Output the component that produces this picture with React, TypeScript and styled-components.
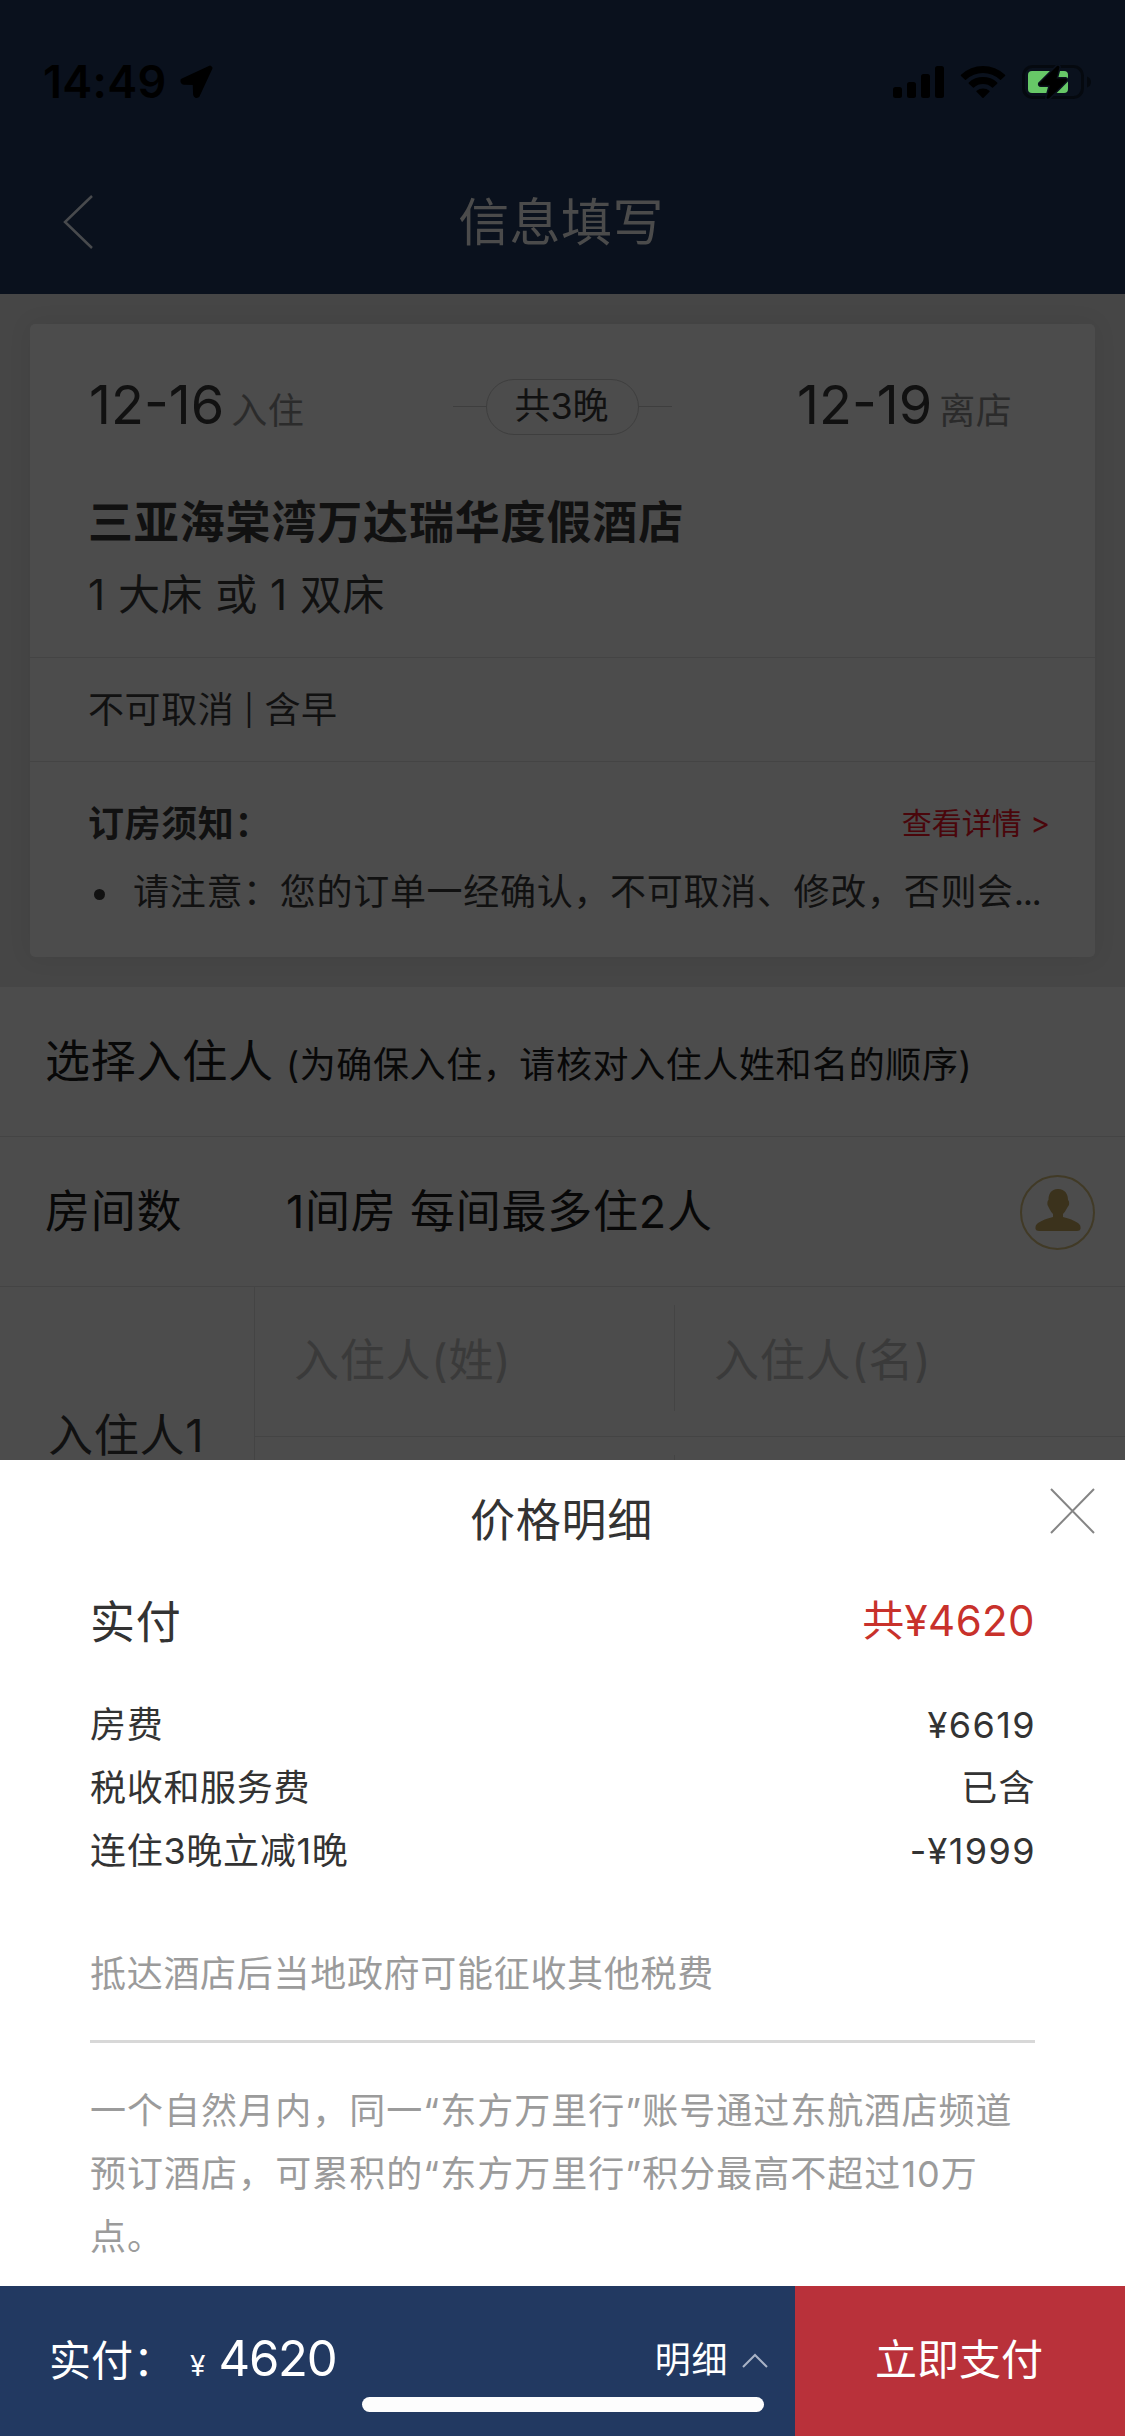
import React from "react";
import styled, { createGlobalStyle } from "styled-components";

const GlobalStyle = createGlobalStyle`
  *, *::before, *::after { box-sizing: border-box; }
  body {
    margin: 0;
    background: #4c4c4c;
    font-family: Inter, "Noto Sans CJK SC", sans-serif;
    font-weight: 400;
  }
`;

const ink = "#111111";
const hairline = "#444444";

const Screen = styled.div`
  display: flex;
  flex-direction: column;
  position: relative;
  width: 1125px;
  height: 2436px;
  overflow: hidden;
`;

/* ---------- header ---------- */

const Header = styled.header`
  height: 294px;
  flex: none;
  background: #0a111d;
`;

const StatusBar = styled.div`
  display: flex;
  align-items: center;
  height: 150px;
  padding: 14px 34px 0 43px;
`;

const Clock = styled.span`
  font-size: 45px;
  font-weight: 600;
  line-height: 60px;
  letter-spacing: 0.3px;
  color: #000;
  margin-right: 11px;
`;

const StatusIcons = styled.div`
  display: flex;
  align-items: center;
  gap: 15px;
  margin-left: auto;
`;

const NavBar = styled.div`
  display: grid;
  grid-template-columns: 160px 1fr 160px;
  align-items: center;
  height: 144px;
`;

const BackIcon = styled.svg`
  margin-left: 62px;
`;

const NavTitle = styled.h1`
  margin: 2px 3px 0 0;
  text-align: center;
  font-size: 51px;
  font-weight: 400;
  line-height: 72px;
  letter-spacing: 0.4px;
  color: #4b4b4b;
`;

/* ---------- booking page ---------- */

const Page = styled.main`
  height: 1166px;
  flex: none;
  overflow: hidden;
  background: #464646;
  padding-top: 30px;
  color: ${ink};
`;

const Card = styled.section`
  height: 633px;
  margin: 0 30px 30px;
  background: #4c4c4c;
  border-radius: 5px;
  box-shadow: 0 0 24px rgba(0, 0, 0, 0.07);
`;

const StaySummary = styled.div`
  height: 334px;
  padding: 2px 60px 0 58px;
  border-bottom: 1px solid ${hairline};
`;

const Dates = styled.div`
  display: grid;
  grid-template-columns: 365px 219px 1fr;
  align-items: center;
  height: 161px;
`;

const DateText = styled.div<{ $indent?: number }>`
  display: flex;
  align-items: baseline;
  gap: 7px;
  padding-top: 2px;
  padding-left: ${(p) => p.$indent ?? 1}px;
  font-size: 54px;
  line-height: 66px;
`;

const DateNote = styled.span`
  font-size: 36px;
  letter-spacing: 0.6px;
  color: #2b2b2b;
`;

const Nights = styled.div`
  display: flex;
  align-items: center;

  &::before, &::after {
    content: "";
    flex: 1;
    height: 1px;
    background: #3e3e3e;
  }
`;

const NightsPill = styled.span`
  width: 153px;
  height: 56px;
  padding-right: 2px;
  border: 1px solid #3e3e3e;
  border-radius: 28px;
  text-align: center;
  font-size: 36px;
  line-height: 52px;
`;

const HotelName = styled.h2`
  margin: 0;
  font-size: 45px;
  font-weight: 700;
  line-height: 71px;
  letter-spacing: 0.85px;
`;

const BedType = styled.div`
  font-size: 42px;
  line-height: 73px;
  letter-spacing: 0.5px;
`;

const Policy = styled.div`
  display: flex;
  height: 104px;
  padding: 1px 60px 0 58px;
  border-bottom: 1px solid ${hairline};
  font-size: 36px;
  line-height: 103px;
  letter-spacing: 0.6px;
`;

const Bar = styled.span`
  width: 30px;
  text-align: center;
  font-size: 30px;
`;

const Notice = styled.div`
  padding: 28px 45px 0 58px;
`;

const NoticeHead = styled.div`
  display: flex;
  justify-content: space-between;
  font-size: 36px;
  font-weight: 700;
  line-height: 68px;
  letter-spacing: 0.6px;
`;

const DetailLink = styled.a`
  font-size: 30px;
  font-weight: 400;
  line-height: 66px;
  letter-spacing: 0;
  color: #4a060b;
`;

const NoticeItem = styled.div`
  display: flex;
  align-items: center;
  padding-left: 6px;
  font-size: 36px;
  line-height: 69px;
  letter-spacing: 0.7px;
  white-space: nowrap;

  &::before {
    content: "";
    flex: none;
    width: 11px;
    height: 11px;
    margin: 4px 28px 0 0;
    border-radius: 50%;
    background: ${ink};
  }
`;

const Dots = styled.span`
  letter-spacing: -1.5px;
`;

const Form = styled.section`
  height: 480px;
  background: #4c4c4c;
  color: #080808;
`;

const FormRow = styled.div`
  display: flex;
  align-items: center;
  height: 150px;
  padding: 1px 30px 0 45px;
  border-bottom: 1px solid ${hairline};
  font-size: 45px;
  line-height: 66px;
  letter-spacing: 0.75px;
`;

const FormLabel = styled.span`
  width: 241px;
`;

const FormHint = styled.small`
  font-size: 36px;
  letter-spacing: 0.6px;
  padding-top: 6px;
`;

const Contact = styled.svg`
  margin-left: auto;
`;

const Guests = styled.div`
  display: grid;
  grid-template-columns: 255px 1fr;
  height: 300px;
  font-size: 45px;
  letter-spacing: 0.75px;
`;

const GuestLabel = styled.div`
  height: 300px;
  padding: 125px 0 0 48px;
  line-height: 48px;
  border-right: 1px solid ${hairline};
  color: ${ink};
`;

const GuestFields = styled.div`
  display: grid;
  grid-template-columns: 420px 1fr;
  grid-auto-rows: 150px;
`;

const GuestField = styled.div<{ $divided?: boolean }>`
  display: flex;
  align-items: center;
  padding: 18px 0 25px;
  border-bottom: 1px solid ${hairline};
  color: #3a3a3a;

  span {
    flex: 1;
    height: 106px;
    line-height: 112px;
    padding-left: 39px;
    border-right: ${(p) => (p.$divided ? `1px solid ${hairline}` : "none")};
  }
`;

/* ---------- price sheet ---------- */

const Sheet = styled.section`
  height: 826px;
  flex: none;
  background: #fff;
  color: #333;
`;

const SheetHead = styled.div`
  display: grid;
  grid-template-columns: 119px 1fr 121px;
  height: 120px;
`;

const SheetTitle = styled.h2`
  grid-column: 2;
  margin: 0;
  text-align: center;
  font-size: 45px;
  font-weight: 400;
  line-height: 122px;
  letter-spacing: 0.75px;
`;

const CloseIcon = styled.svg`
  margin: 28px 30px 0 auto;
`;

const SheetBody = styled.div`
  padding: 0 90px;
`;

const TotalRow = styled.div`
  display: flex;
  justify-content: space-between;
  align-items: center;
  height: 78px;
  margin-bottom: 36px;
  font-size: 45px;
  letter-spacing: 0.75px;
`;

const TotalAmount = styled.span`
  font-size: 42px;
  letter-spacing: 0.4px;
  color: #c8312b;
  margin-top: -4px;
`;

const PriceRow = styled.div`
  display: flex;
  justify-content: space-between;
  font-size: 36px;
  line-height: 63px;
  letter-spacing: 0.7px;
`;

const Amount = styled.span`
  letter-spacing: 1.4px;
  margin-right: -1px;
`;

const TaxNote = styled.p`
  margin: 60px 0 34px;
  font-size: 36px;
  line-height: 63px;
  letter-spacing: 0.7px;
  color: #9b9b9b;
`;

const Rule = styled.hr`
  height: 3px;
  margin: 0 0 37px;
  border: 0;
  background: #d8d8d8;
`;

const PointsNote = styled.p`
  margin: 0;
  font-size: 36px;
  line-height: 63px;
  letter-spacing: 1.03px;
  color: #9b9b9b;
`;

/* ---------- payment bar ---------- */

const PayBar = styled.footer`
  display: grid;
  grid-template-columns: 795px 1fr;
  height: 150px;
  flex: none;
  color: #fff;
  font-size: 42px;
`;

const PaySummary = styled.div`
  display: flex;
  align-items: baseline;
  height: 150px;
  padding: 0 27px 0 49px;
  line-height: 145px;
  background: #223961;
`;

const Currency = styled.span`
  font-size: 28px;
  margin-right: 13px;
  margin-left: 15px;
`;

const PayAmount = styled.span`
  font-size: 49px;
  letter-spacing: -1.2px;
`;

const DetailToggle = styled.span`
  align-self: flex-start;
  display: flex;
  align-items: center;
  gap: 14px;
  margin-left: auto;
  font-size: 36px;
  line-height: 149px;
  letter-spacing: 0.6px;
`;

const PayButton = styled.button`
  height: 150px;
  border: 0;
  padding: 0 2px 2px 0;
  font: inherit;
  line-height: 148px;
  color: #fff;
  background: #b9313a;
`;

const HomeIndicator = styled.div`
  position: absolute;
  left: 362px;
  bottom: 24px;
  width: 402px;
  height: 15px;
  border-radius: 8px;
  background: #fdfdfd;
`;

const prices = [
  { label: "房费", amount: "¥6619" },
  { label: "税收和服务费", amount: "已含" },
  { label: "连住3晚立减1晚", amount: "-¥1999" },
];

function LocationArrow() {
  return (
    <svg width="36" height="36" viewBox="0 0 36 36">
      <path
        d="M32 3 L4 16 Q3.5 19 6 19.300 L16.200 19.500 L16.600 30.500 Q17.500 33.500 20 32 L33 4 Z"
        fill="#000"
        stroke="#000"
        strokeWidth="3"
        strokeLinejoin="round"
      />
    </svg>
  );
}

function Signal() {
  return (
    <svg width="52" height="34" viewBox="0 0 52 34">
      <rect x="0" y="22" width="9" height="11" rx="2.500" />
      <rect x="14" y="17" width="9" height="16" rx="2.500" />
      <rect x="28" y="9" width="9" height="24" rx="2.500" />
      <rect x="42" y="1" width="9" height="32" rx="2.500" />
    </svg>
  );
}

function Wifi() {
  return (
    <svg width="46" height="34" viewBox="0 0 46 34">
      <path d="M1 9.800 A32 32 0 0 1 45 9.800 Q45.500 10.500 45 11 L41 14.800 Q40.500 15.200 40 14.700 A25 25 0 0 0 6 14.700 Q5.500 15.200 5 14.800 L1 11 Q0.500 10.500 1 9.800 Z" />
      <path d="M8.800 17.600 A20.500 20.500 0 0 1 37.200 17.600 Q37.700 18.200 37.200 18.800 L33 22.600 Q32.500 23 32 22.500 A13.500 13.500 0 0 0 14 22.500 Q13.500 23 13 22.600 L8.800 18.800 Q8.300 18.200 8.800 17.600 Z" />
      <path d="M16.500 26.800 Q16 26.200 16.600 25.700 A10 10 0 0 1 29.400 25.700 Q30 26.200 29.500 26.800 L23.600 32.700 Q23 33.200 22.400 32.700 Z" />
    </svg>
  );
}

function Battery() {
  return (
    <svg width="70" height="36" viewBox="0 0 70 36">
      <rect x="2.500" y="2.500" width="59" height="31" rx="9" fill="none" stroke="#05090f" strokeWidth="3" />
      <path d="M66 12.500 Q70 14 70 18 Q70 22 66 23.500 Z" fill="#05090f" />
      <rect x="7" y="7" width="40" height="22" rx="4" fill="#67c867" />
      <path
        d="M36 2 L18.500 19.500 Q18 21.500 19.800 21.500 L29 21.500 L25.500 34 Q26.500 35.500 28.500 34 L45.500 17 Q46.500 14.800 44.500 14.500 L35.500 14.500 L38.500 3 Q37.500 1 36 2 Z"
        fill="#000"
        stroke="#0a111d"
        strokeWidth="3"
        paintOrder="stroke"
      />
    </svg>
  );
}

function ContactIcon() {
  return (
    <Contact width="75" height="75" viewBox="0 0 75 75">
      <circle cx="37.500" cy="37.500" r="36.500" fill="none" stroke="#413a26" strokeWidth="2" />
      <path
        d="M38 14 C45 14 48 19 48 25 Q49.500 26 49 30 Q47.500 32 46.500 34 Q45 37 43 39 L43 42 Q52 44 58 48 Q61 50 60.500 54 Q60 56 57 56 L19 56 Q16 56 15.500 54 Q15 50 18 48 Q24 44 33 42 L33 39 Q31 37 29.500 34 Q28.500 32 27.500 30 Q27 26 28.500 25 C28.500 19 31 14 38 14 Z"
        fill="#3b321c"
      />
    </Contact>
  );
}

export default function App() {
  return (
    <Screen>
      <GlobalStyle />
      <Header>
        <StatusBar>
          <Clock>14:49</Clock>
          <LocationArrow />
          <StatusIcons>
            <Signal />
            <Wifi />
            <Battery />
          </StatusIcons>
        </StatusBar>
        <NavBar>
          <BackIcon width="32" height="54" viewBox="0 0 32 54">
            <path d="M30 1 L3 27 L30 53" fill="none" stroke="#484a4d" strokeWidth="2.500" />
          </BackIcon>
          <NavTitle>信息填写</NavTitle>
        </NavBar>
      </Header>

      <Page>
        <Card>
          <StaySummary>
            <Dates>
              <DateText>
                12-16<DateNote>入住</DateNote>
              </DateText>
              <Nights>
                <NightsPill>共3晚</NightsPill>
              </Nights>
              <DateText $indent={125}>
                12-19<DateNote>离店</DateNote>
              </DateText>
            </Dates>
            <HotelName>三亚海棠湾万达瑞华度假酒店</HotelName>
            <BedType>1 大床 或 1 双床</BedType>
          </StaySummary>
          <Policy>
            不可取消<Bar>|</Bar>含早
          </Policy>
          <Notice>
            <NoticeHead>
              订房须知：<DetailLink>查看详情 &gt;</DetailLink>
            </NoticeHead>
            <NoticeItem>
              请注意：您的订单一经确认，不可取消、修改，否则会<Dots>...</Dots>
            </NoticeItem>
          </Notice>
        </Card>

        <Form>
          <FormRow>
            <FormLabel>选择入住人</FormLabel>
            <FormHint>(为确保入住，请核对入住人姓和名的顺序)</FormHint>
          </FormRow>
          <FormRow>
            <FormLabel>房间数</FormLabel>
            <span>1间房 每间最多住2人</span>
            <ContactIcon />
          </FormRow>
          <Guests>
            <GuestLabel>入住人1</GuestLabel>
            <GuestFields>
              <GuestField $divided>
                <span>入住人(姓)</span>
              </GuestField>
              <GuestField>
                <span>入住人(名)</span>
              </GuestField>
              <GuestField $divided>
                <span />
              </GuestField>
              <GuestField />
            </GuestFields>
          </Guests>
        </Form>
      </Page>

      <Sheet>
        <SheetHead>
          <SheetTitle>价格明细</SheetTitle>
          <CloseIcon width="45" height="46" viewBox="0 0 45 46">
            <path d="M1 1 L44 45 M44 1 L1 45" fill="none" stroke="#858585" strokeWidth="2" />
          </CloseIcon>
        </SheetHead>
        <SheetBody>
          <TotalRow>
            实付<TotalAmount>共¥4620</TotalAmount>
          </TotalRow>
          {prices.map((p) => (
            <PriceRow key={p.label}>
              {p.label}
              <Amount>{p.amount}</Amount>
            </PriceRow>
          ))}
          <TaxNote>抵达酒店后当地政府可能征收其他税费</TaxNote>
          <Rule />
          <PointsNote>
            一个自然月内，同一“东方万里行”账号通过东航酒店频道预订酒店，可累积的“东方万里行”积分最高不超过10万点。
          </PointsNote>
        </SheetBody>
      </Sheet>

      <PayBar>
        <PaySummary>
          实付：<Currency>¥</Currency>
          <PayAmount>4620</PayAmount>
          <DetailToggle>
            明细
            <svg width="26" height="15" viewBox="0 0 26 15">
              <path d="M1 14 L13 2 L25 14" fill="none" stroke="#a9b3c6" strokeWidth="2" />
            </svg>
          </DetailToggle>
        </PaySummary>
        <PayButton>立即支付</PayButton>
      </PayBar>
      <HomeIndicator />
    </Screen>
  );
}
